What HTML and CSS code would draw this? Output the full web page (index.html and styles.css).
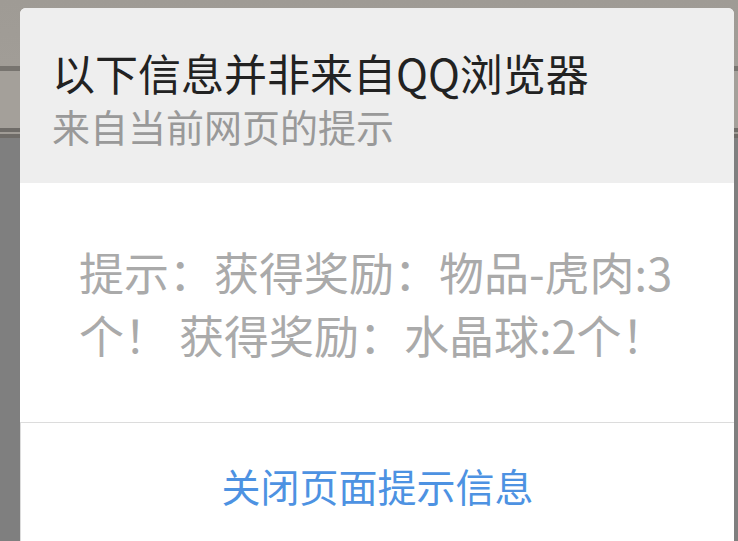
FILE: index.html
```html
<!DOCTYPE html>
<html lang="zh-CN">
<head>
    <meta charset="UTF-8">
    <meta name="viewport" content="width=device-width, initial-scale=1.0">
    <title>来自当前网页的提示</title>
    <link rel="stylesheet" href="styles.css">
</head>
<body>
    <div class="dialog">
        <div class="dialog-header">
            <h1 class="dialog-title">以下信息并非来自QQ浏览器</h1>
            <p class="dialog-subtitle">来自当前网页的提示</p>
        </div>
        <div class="dialog-body">
            <p class="dialog-message">提示：获得奖励：物品-虎肉:3个！ 获得奖励：水晶球:2个！</p>
        </div>
        <div class="dialog-footer">
            <button class="close-btn">关闭页面提示信息</button>
        </div>
    </div>
</body>
</html>
```

FILE: styles.css
```css
html, body {
    height: 100%;
}

body {
    margin: 0;
    overflow: hidden;
    font-family: "Noto Sans CJK SC", "Noto Sans", sans-serif;
    background-color: #7f7f7f;
    background-image: linear-gradient(to bottom,
        #9f9b95 0, #a19d97 66px,
        #77746f 66px, #77746f 71px,
        #a4a09a 71px, #a4a09a 128px,
        #6f6c68 128px, #6f6c68 132px,
        #a09c96 132px, #a09c96 134px,
        #6f6c68 134px, #6f6c68 138px,
        #7f7f7f 138px);
}

.dialog {
    margin: 8px 4px 0 20px;
    border-radius: 6px 6px 0 0;
    overflow: hidden;
    background-color: #fff;
}

.dialog-header {
    background-color: #eeeeee;
    padding: 34px 33px 33px 32px;
}

.dialog-title {
    margin: 0;
    font-size: 43px;
    font-weight: normal;
    line-height: 60px;
    color: #222;
}

.dialog-subtitle {
    margin: 0;
    font-size: 38px;
    line-height: 48px;
    color: #999;
}

.dialog-body {
    padding: 57px 52px 56px 59px;
    border-bottom: 1px solid #dcdcdc;
}

.dialog-message {
    margin: 0;
    font-size: 45px;
    line-height: 63px;
    color: #aaa;
}

.dialog-footer {
    border-left: 1px solid #dcdcdc;
    padding: 37px 0 40px;
    text-align: center;
}

.close-btn {
    background: none;
    border: none;
    padding: 0;
    font-family: inherit;
    font-size: 39px;
    line-height: 50px;
    color: #4d92e2;
    cursor: pointer;
}
```
